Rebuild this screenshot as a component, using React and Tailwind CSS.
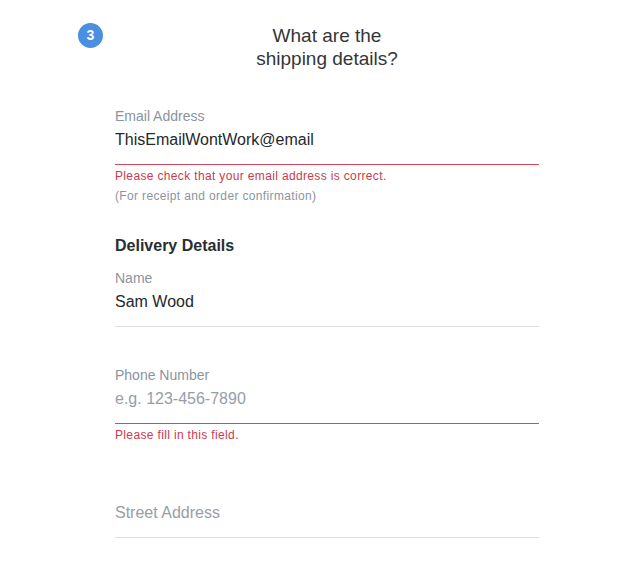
import React from 'react'

const Field = ({ label, value, placeholder, error, showLabel = true, className = '' }) => {
  return (
    <div className={className}>
      <div className={`border-b pb-3 ${error ? 'border-[#d4485c]' : 'border-[#dcdfe2]'}`}>
        <div className={`h-5 text-[14px] leading-5 text-[#8b949e] ${showLabel ? '' : 'invisible'}`}>{label}</div>
        <input
          readOnly
          value={value}
          placeholder={placeholder}
          className="mt-0.5 block h-6 w-full bg-transparent p-0 text-[16px] leading-6 text-[#25282b] outline-none placeholder:text-[#969ea6]"
        />
      </div>
      {error && (
        <div className="mt-[3px] text-[12px] leading-4 tracking-[0.35px] text-[#cc3a4e]">{error}</div>
      )}
    </div>
  )
}

export default function App() {
  return (
    <div className="min-h-[564px] bg-white font-['Liberation_Sans',Arial,sans-serif]">
      <div className="ml-[78px] w-[498px]">
        {/* Step header */}
        <div className="flex items-start pt-[23px]">
          <div className="flex h-[25px] w-[25px] shrink-0 items-center justify-center rounded-full bg-[#4a8fe0] text-[14px] font-bold text-white">
            3
          </div>
          <h1 className="mt-px flex-1 text-center text-[19px] leading-[23px] text-[#333639]">
            What are the
            <br />
            shipping details?
          </h1>
          <div className="w-[25px] shrink-0" />
        </div>

        {/* Form */}
        <form className="mt-9 px-[37px]" onSubmit={(e) => e.preventDefault()}>
          <Field
            label="Email Address"
            value="ThisEmailWontWork@email"
            error="Please check that your email address is correct."
          />
          <div className="mt-1 text-[12px] leading-4 tracking-[0.35px] text-[#8b949e]">
            (For receipt and order confirmation)
          </div>

          <h2 className="mt-[30px] text-[16px] font-bold leading-6 text-[#2a2d31]">Delivery Details</h2>

          <Field className="mt-[10px]" label="Name" value="Sam Wood" />
          <Field
            className="mt-[38px]"
            label="Phone Number"
            value=""
            placeholder="e.g. 123-456-7890"
            error="Please fill in this field."
          />
          <Field className="mt-[36px]" label="Street Address" value="" placeholder="Street Address" showLabel={false} />
        </form>
      </div>
    </div>
  )
}
